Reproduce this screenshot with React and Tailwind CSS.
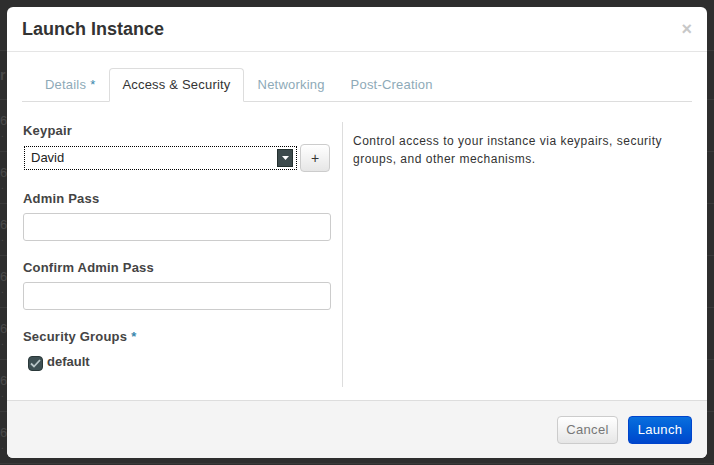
import React from 'react';

const font = { fontFamily: '"Liberation Sans", Arial, sans-serif' };

function BackgroundPage() {
  const rows = Array.from({ length: 7 });
  return (
    <div className="flex flex-col text-[#4a4a4a]">
      <div className="h-[51px] border-b border-[#3a3a3a]" />
      <div className="h-[49px] border-b border-[#3a3a3a] flex items-center">
        <span className="text-[14px] font-bold">r</span>
      </div>
      {rows.map((_, i) => (
        <div key={i} className="h-[52px] border-b border-[#3a3a3a] flex flex-col justify-center gap-[2px]">
          <span className="text-[13px] leading-[14px]">6</span>
          <span className="text-[10px] leading-[8px] ml-[1px]">.</span>
        </div>
      ))}
    </div>
  );
}

function Tabs() {
  const tabs = ['Details', 'Access & Security', 'Networking', 'Post-Creation'];
  return (
    <div className="flex pl-[11px] border-b border-[#dddddd] h-[33px] items-end tracking-[0.2px]">
      {tabs.map((t) =>
        t === 'Access & Security' ? (
          <div
            key={t}
            className="mr-[2px] h-[34px] -mb-[1px] px-[12px] flex items-center bg-white border border-[#dddddd] border-b-white rounded-t-[4px] text-[13px] text-[#333]"
          >
            {t}
          </div>
        ) : (
          <div key={t} className="mr-[2px] h-[33px] px-[12px] flex items-center text-[13px] text-[#8eaab8]">
            {t}
            {t === 'Details' && <span className="ml-[4px] text-[#3a87ad]">*</span>}
          </div>
        )
      )}
    </div>
  );
}

function Label({ children, required }) {
  return (
    <div className="h-[18px] flex items-center text-[13px] font-bold text-[#444] tracking-[0.2px]">
      {children}
      {required && <span className="ml-[4px] text-[#3a87ad]">*</span>}
    </div>
  );
}

export default function App() {
  return (
    <div className="relative w-[714px] h-[465px] overflow-hidden bg-[#2e2e2e]" style={font}>
      <BackgroundPage />
      <div className="absolute left-[7px] top-[7px] w-[700px] h-[451px] bg-white rounded-[6px] flex flex-col overflow-hidden">
        <div className="h-[45px] shrink-0 border-b border-[#e5e5e5] pl-[15px] pr-[15px] flex items-center justify-between">
          <h3 className="text-[18px] font-bold text-[#333] mt-[1px]">Launch Instance</h3>
          <span className="text-[18px] font-bold text-[#c8c8c8] leading-none">×</span>
        </div>

        <div className="flex-1 px-[15px] pt-[17px]">
          <Tabs />
          <div className="flex pt-[20px]">
            <div className="w-[308px] ml-[1px] flex flex-col">
              <Label>Keypair</Label>
              <div className="mt-[4px] h-[28px] flex items-center gap-[3px]">
                <div className="ml-[1px] w-[273px] h-[24px] border border-dotted border-black bg-white flex items-center justify-between pl-[6px] pr-[3px]">
                  <span className="text-[13px] text-[#222]">David</span>
                  <div className="w-[16px] h-[18px] bg-[#3c4a4c] border border-[#24302f] flex items-center justify-center">
                    <svg width="7" height="4" viewBox="0 0 7 4">
                      <path d="M0 0h7L3.5 4z" fill="#fff" />
                    </svg>
                  </div>
                </div>
                <div className="w-[30px] h-[28px] rounded-[4px] border border-[#cccccc] bg-gradient-to-b from-white to-[#e6e6e6] flex items-center justify-center text-[14px] text-[#333]">
                  +
                </div>
              </div>

              <div className="mt-[18px]">
                <Label>Admin Pass</Label>
              </div>
              <div className="mt-[5px] h-[28px] border border-[#cccccc] rounded-[3px]" />

              <div className="mt-[18px]">
                <Label>Confirm Admin Pass</Label>
              </div>
              <div className="mt-[5px] h-[28px] border border-[#cccccc] rounded-[3px]" />

              <div className="mt-[18px]">
                <Label required>Security Groups</Label>
              </div>
              <div className="mt-[8px] flex items-start gap-[4px] pl-[5px]">
                <div className="mt-[2px] w-[15px] h-[15px] rounded-[4px] bg-[#3e5053] border border-[#2a3839] flex items-center justify-center">
                  <svg width="11" height="9" viewBox="0 0 11 9">
                    <path d="M1 4.5l3 3L10 1" stroke="#b9c6c8" strokeWidth="1.8" fill="none" />
                  </svg>
                </div>
                <span className="text-[13px] font-bold text-[#444] leading-[16px]">default</span>
              </div>
            </div>

            <div className="ml-[11px] h-[265px] border-l border-[#dddddd] pl-[10px] pt-[10px] w-[340px]">
              <p className="text-[12px] leading-[18px] text-[#333] tracking-[0.5px]">
                Control access to your instance via keypairs, security groups, and other mechanisms.
              </p>
            </div>
          </div>
        </div>

        <div className="h-[58px] shrink-0 border-t border-[#dddddd] bg-[#f4f4f4] flex items-center justify-end gap-[10px] pr-[15px]">
          <div className="w-[61px] h-[28px] rounded-[4px] border border-[#cccccc] bg-gradient-to-b from-white to-[#e6e6e6] flex items-center justify-center text-[13px] text-[#777] tracking-[0.3px]">
            Cancel
          </div>
          <div className="w-[64px] h-[28px] rounded-[4px] border border-[#0044cc] bg-gradient-to-b from-[#0a6fde] to-[#0046cc] flex items-center justify-center text-[13px] text-white tracking-[0.3px]">
            Launch
          </div>
        </div>
      </div>
    </div>
  );
}
